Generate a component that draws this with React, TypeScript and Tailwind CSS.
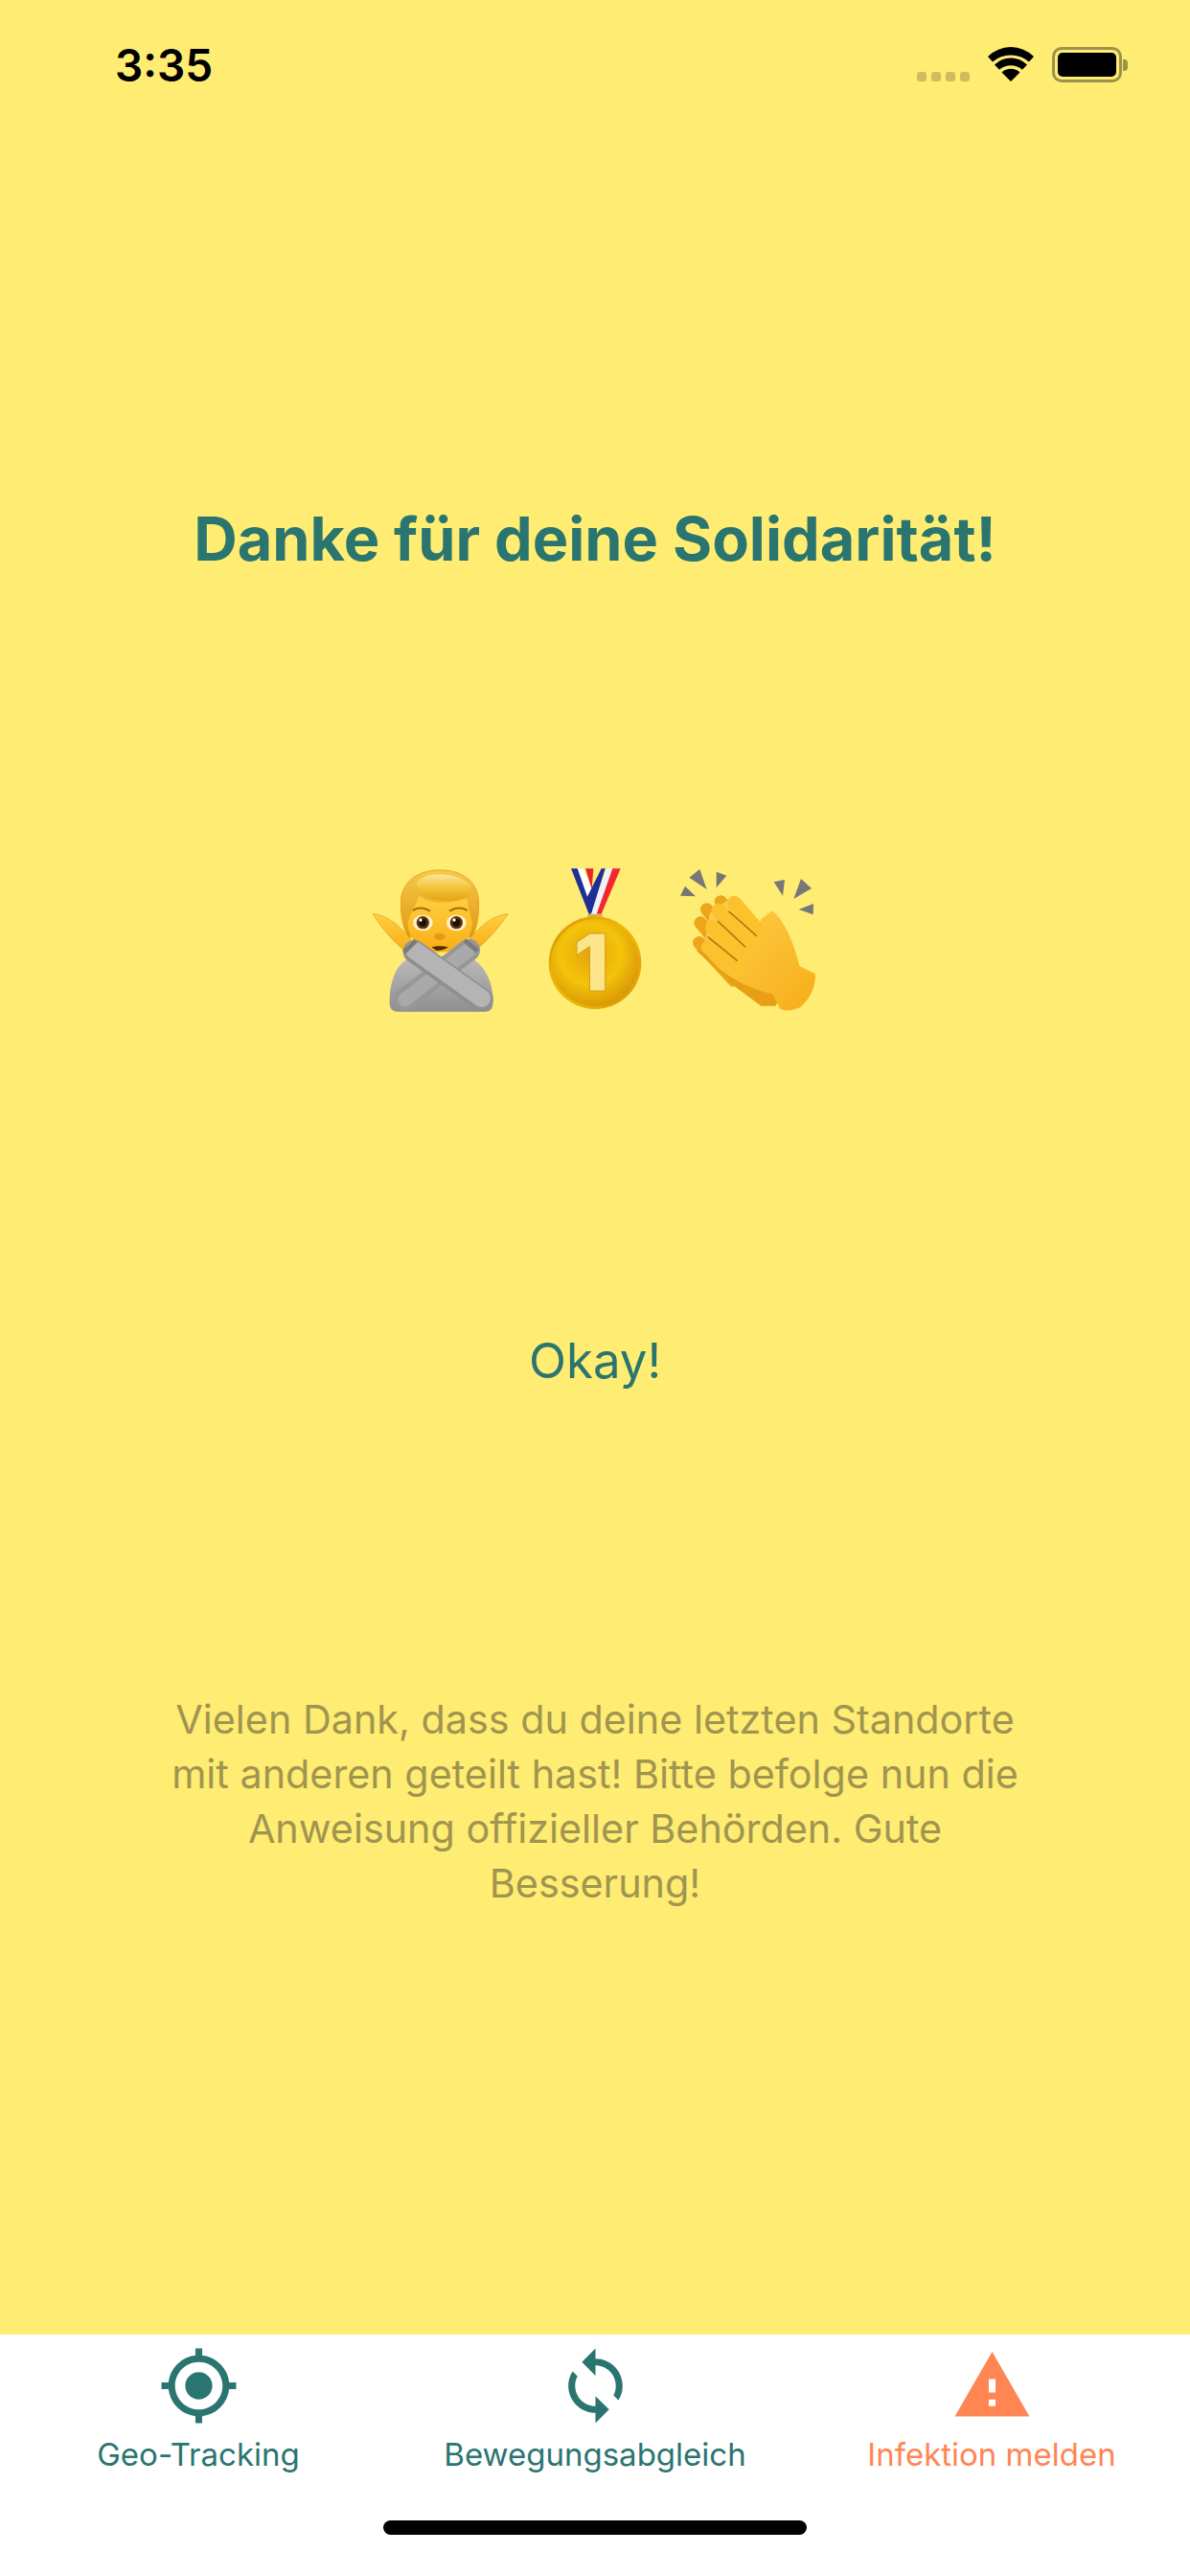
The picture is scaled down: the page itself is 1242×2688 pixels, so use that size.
import React from 'react';
import { MdGpsFixed, MdSync, MdWarning } from 'react-icons/md';

const StatusBar = () => (
    <div className="flex items-start justify-between h-[134px] pl-[120px] pr-[65px] pt-[42px]">
        <span className="text-[46px] leading-[52px] font-semibold text-black font-['Inter',sans-serif]">3:35</span>
        <div className="flex items-end h-[37px] mt-[7px]">
            <div className="flex gap-[5px] mb-[1px] mr-[19px]">
                <div className="w-[10px] h-[10px] rounded-[3px] bg-[#cdbd5c]" />
                <div className="w-[10px] h-[10px] rounded-[3px] bg-[#cdbd5c]" />
                <div className="w-[10px] h-[10px] rounded-[3px] bg-[#cdbd5c]" />
                <div className="w-[10px] h-[10px] rounded-[3px] bg-[#cdbd5c]" />
            </div>
            <svg width="48" height="37" viewBox="0 0 48 37" className="mr-[19px]">
                <path d="M24 36 L14.500 26.500 A14 14 0 0 1 33.500 26.500 Z" fill="#000" />
                <path d="M24 11.500 A25 25 0 0 1 41 18.500 L36 23.800 A18 18 0 0 0 12 23.800 L7 18.500 A25 25 0 0 1 24 11.500 Z" fill="#000" />
                <path d="M24 0 A36 36 0 0 1 48 10 L43 15.500 A29 29 0 0 0 5 15.500 L0 10 A36 36 0 0 1 24 0 Z" fill="#000" />
            </svg>
            <div className="flex items-center gap-[1px]">
                <div className="w-[73px] h-[37px] rounded-[10px] border-[3px] border-[#9d9249] p-[3px]">
                    <div className="w-full h-full rounded-[5px] bg-black" />
                </div>
                <div className="w-[5px] h-[12px] rounded-r-[4px] bg-[#9d9249]" />
            </div>
        </div>
    </div>
);

const PersonEmoji = () => (
    <svg width="160" height="160" viewBox="60 70 480 480">
        <defs>
            <linearGradient id="skin" x1="0" y1="0" x2="0" y2="1">
                <stop offset="0" stopColor="#ffcf3f" />
                <stop offset="1" stopColor="#f8ae17" />
            </linearGradient>
            <linearGradient id="hair" x1="0" y1="0" x2="0" y2="1">
                <stop offset="0" stopColor="#fbe59a" />
                <stop offset="0.5" stopColor="#f4c53a" />
                <stop offset="1" stopColor="#e6a414" />
            </linearGradient>
            <linearGradient id="hairSide" x1="0" y1="0" x2="0" y2="1">
                <stop offset="0" stopColor="#f6c84a" />
                <stop offset="1" stopColor="#e09a12" />
            </linearGradient>
            <linearGradient id="shirt" x1="0" y1="0" x2="0" y2="1">
                <stop offset="0" stopColor="#b8b8b8" />
                <stop offset="1" stopColor="#8f8f8f" />
            </linearGradient>
        </defs>
        <path d="M172 190 C172 120 225 85 295 85 C370 85 418 125 416 195 C416 240 408 270 395 295 L195 295 C180 265 172 235 172 190 Z" fill="url(#hairSide)" stroke="#e8a71c" strokeWidth="3" />
        <path d="M193 250 C200 225 222 190 228 165 C270 195 340 190 378 170 C382 195 388 225 396 250 C392 310 350 342 294 342 C240 342 196 310 193 250 Z" fill="url(#skin)" />
        <path d="M222 125 C245 88 345 88 388 130 C394 155 388 170 378 172 C330 190 250 175 228 160 Z" fill="url(#hair)" />
        <path d="M212 210 Q235 196 262 212 M326 212 Q352 196 378 210" fill="none" stroke="#a86a10" strokeWidth="6" strokeLinecap="round" />
        <ellipse cx="241" cy="250" rx="31" ry="25" fill="#fff3c9" />
        <ellipse cx="346" cy="250" rx="31" ry="25" fill="#fff3c9" />
        <circle cx="241" cy="249" r="20" fill="#5b3410" />
        <circle cx="346" cy="249" r="20" fill="#5b3410" />
        <circle cx="241" cy="249" r="12" fill="#1d0f04" />
        <circle cx="346" cy="249" r="12" fill="#1d0f04" />
        <circle cx="234" cy="241" r="5" fill="#fff" />
        <circle cx="339" cy="241" r="5" fill="#fff" />
        <ellipse cx="293" cy="293" rx="17" ry="11" fill="#e59a16" />
        <path d="M268 326 Q293 320 320 326 Q305 338 283 336 Z" fill="#4d2a0c" />
        <path d="M137 505 C135 450 150 390 190 365 L400 365 C440 390 465 450 460 505 Q458 528 435 528 L165 528 Q138 528 137 505 Z" fill="url(#shirt)" />
        <path d="M85 222 C120 225 165 250 205 305 L185 338 C150 310 110 265 85 222 Z" fill="url(#skin)" stroke="#dc9a17" strokeWidth="2" />
        <path d="M507 222 C470 225 425 250 385 305 L405 335 C440 310 480 265 507 222 Z" fill="url(#skin)" stroke="#dc9a17" strokeWidth="2" />
        <path d="M385 335 L185 490" stroke="#979797" strokeWidth="70" strokeLinecap="round" fill="none" />
        <path d="M385 335 L185 490" stroke="#a9a9a9" strokeWidth="44" strokeLinecap="round" fill="none" />
        <path d="M372 305 L412 338" stroke="#7a7a7a" strokeWidth="14" fill="none" />
        <path d="M215 340 L425 490" stroke="#8f8f8f" strokeWidth="72" strokeLinecap="round" fill="none" />
        <path d="M215 336 L425 486" stroke="#b4b4b4" strokeWidth="56" strokeLinecap="round" fill="none" />
        <path d="M182 342 L220 305" stroke="#7a7a7a" strokeWidth="14" fill="none" />
    </svg>
);

const MedalEmoji = () => (
    <svg width="160" height="160" viewBox="540 70 480 480">
        <defs>
            <linearGradient id="gold" x1="0" y1="1" x2="1" y2="0">
                <stop offset="0" stopColor="#f7c600" />
                <stop offset="0.4" stopColor="#dc9e08" />
                <stop offset="0.75" stopColor="#e8a608" />
                <stop offset="1" stopColor="#ffd400" />
            </linearGradient>
            <radialGradient id="goldIn" cx="0.45" cy="0.4" r="0.7">
                <stop offset="0" stopColor="#e4a40a" />
                <stop offset="0.5" stopColor="#f4c30a" />
                <stop offset="1" stopColor="#cf8a06" />
            </radialGradient>
        </defs>
        <path d="M705 80 L745 80 L800 225 L765 225 Z" fill="#fff" />
        <path d="M705 80 L725 80 L775 222 L762 225 Z" fill="#1e2f96" />
        <path d="M750 80 L775 80 L770 145 Z" fill="#e8262a" />
        <path d="M815 80 L860 80 L795 225 L765 225 Z" fill="#eef2fa" />
        <path d="M800 80 L812 80 L768 222 L755 170 Z" fill="#1e2f96" />
        <path d="M835 80 L860 80 L800 222 L785 222 Z" fill="#f2282c" />
        <rect x="757" y="222" width="46" height="14" rx="4" fill="#d9b04a" />
        <circle cx="780" cy="375" r="145" fill="url(#gold)" />
        <circle cx="780" cy="375" r="136" fill="url(#goldIn)" />
        <text x="768" y="463" textAnchor="middle" fontFamily="Inter, sans-serif" fontWeight="900" fontSize="248" fill="#fbe48a" stroke="#d89c10" strokeWidth="3">1</text>
    </svg>
);

const ClapEmoji = () => (
    <svg width="160" height="160" viewBox="1020 70 480 480">
        <defs>
            <linearGradient id="palm" x1="0" y1="0" x2="1" y2="1">
                <stop offset="0" stopColor="#ffd050" />
                <stop offset="1" stopColor="#f7ad18" />
            </linearGradient>
        </defs>
        <g fill="#777777" strokeLinejoin="round">
            <polygon points="1108,82 1130,145 1075,108" />
            <polygon points="1160,90 1192,102 1160,140" />
            <polygon points="1047,165 1095,167 1062,135" />
            <polygon points="1340,122 1374,115 1368,165" />
            <polygon points="1425,112 1458,142 1402,175" />
            <polygon points="1418,208 1464,190 1463,224" />
        </g>
        <g stroke="#eda51c" strokeWidth="40" strokeLinecap="round" fill="none">
            <path d="M1174 184 L1270 300" />
            <path d="M1130 208 L1230 330" />
            <path d="M1110 250 L1210 370" />
            <path d="M1106 312 L1215 430" />
        </g>
        <path d="M1095 335 L1225 455 L1300 510 L1345 510 L1385 440 L1240 380 Z" fill="#e99f14" />
        <path d="M1290 280 L1300 238 L1335 212 C1375 245 1405 320 1420 385 L1470 410 Q1472 470 1422 515 Q1385 530 1360 520 L1335 472 C1270 460 1210 425 1170 395 L1120 340 L1140 220 L1200 175 Z" fill="url(#palm)" />
        <g stroke="#fcc22e" strokeWidth="46" strokeLinecap="round" fill="none">
            <path d="M1216 188 L1300 285" />
            <path d="M1168 212 L1260 320" />
            <path d="M1148 264 L1240 365" />
            <path d="M1136 326 L1220 400" />
        </g>
        <g stroke="#b9770b" strokeWidth="5" strokeLinecap="round" fill="none">
            <path d="M1200 215 L1285 290" />
            <path d="M1165 245 L1250 325" />
            <path d="M1135 295 L1225 368" />
        </g>
    </svg>
);

const TabItem = ({ icon, label, color }: { icon: React.ReactNode; label: string; color: string }) => (
    <div className={`flex flex-col items-center pt-[11px] ${color}`}>
        {icon}
        <span className="mt-[9px] text-[33px] leading-[40px] font-['Inter',sans-serif]">{label}</span>
    </div>
);

export default function App() {
    return (
        <div className="flex flex-col w-[1242px] h-[2688px] bg-[#ffec72] font-['Inter',sans-serif]">
            <StatusBar />

            <div className="flex flex-col items-center flex-1">
                <h1 className="mt-[390px] text-[63px] leading-[76px] font-bold text-[#2a7570]">Danke für deine Solidarität!</h1>
                <div className="flex justify-center mt-[303px]">
                    <PersonEmoji />
                    <MedalEmoji />
                    <ClapEmoji />
                </div>
                <button className="mt-[325px] text-[51px] leading-[64px] text-[#2a7570]">Okay!</button>
                <p className="mt-[314px] w-[900px] text-center text-[41.3px] leading-[57px] text-[#a09550]">
                    Vielen Dank, dass du deine letzten Standorte mit anderen geteilt hast! Bitte befolge nun die Anweisung offizieller Behörden. Gute Besserung!
                </p>
            </div>

            <div className="h-[252px] bg-white">
                <div className="grid grid-cols-3">
                    <TabItem icon={<MdGpsFixed size={85} />} label="Geo-Tracking" color="text-[#2a7570]" />
                    <TabItem icon={<MdSync size={85} />} label="Bewegungsabgleich" color="text-[#2a7570]" />
                    <TabItem icon={<MdWarning size={85} />} label="Infektion melden" color="text-[#ff8552]" />
                </div>
                <div className="w-[442px] h-[15px] mx-auto mt-[49px] rounded-full bg-black" />
            </div>
        </div>
    );
}
